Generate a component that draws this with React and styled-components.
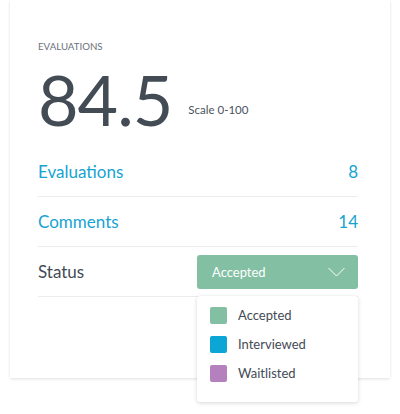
import React from 'react'
import styled, { createGlobalStyle } from 'styled-components'

const GlobalStyle = createGlobalStyle`
  body {
    margin: 0;
    background: #fff;
    font-family: Lato, "Open Sans", sans-serif;
  }
`

const Page = styled.div`
  min-height: 414px;
  box-sizing: border-box;
  padding: 0 10px 10px;
`

const Card = styled.div`
  width: 380px;
  box-sizing: border-box;
  background: #fff;
  box-shadow: 0 1px 3px rgba(0, 0, 0, 0.13);
  padding: 40px 32px 81px 28px;
`

const Label = styled.div`
  font-size: 9.7px;
  line-height: 12px;
  color: #6a717a;
  text-transform: uppercase;
`

const ScoreLine = styled.div`
  display: flex;
  align-items: flex-end;
  gap: 16px;
  margin-top: 12px;
  margin-bottom: 13px;
`

const Score = styled.div`
  font-size: 70px;
  line-height: 70px;
  color: #434b55;
  letter-spacing: -1px;
`

const Scale = styled.div`
  font-size: 11.5px;
  line-height: 14px;
  color: #4a535d;
  margin-bottom: 17px;
`

const Row = styled.div`
  display: flex;
  align-items: center;
  justify-content: space-between;
  min-height: 49px;
  border-bottom: 1px solid #ececec;
  font-size: 17px;
  color: ${p => (p.$link ? '#16a3d2' : '#434b55')};
`

const SelectWrap = styled.div`
  position: relative;
`

const Select = styled.div`
  width: 161px;
  height: 34px;
  box-sizing: border-box;
  background: #82bfa3;
  border-radius: 3px;
  display: flex;
  align-items: center;
  justify-content: space-between;
  padding: 0 13px 0 15px;
  color: #fff;
  font-size: 13px;
`

const Menu = styled.div`
  position: absolute;
  top: 41px;
  left: 0;
  width: 161px;
  box-sizing: border-box;
  background: #fff;
  border-radius: 3px;
  box-shadow: 0 1px 4px rgba(0, 0, 0, 0.16);
  padding: 5px 13px 14px;
  z-index: 2;
`

const Option = styled.div`
  display: flex;
  align-items: center;
  gap: 11px;
  height: 29px;
  font-size: 13px;
  color: #434b55;
`

const Swatch = styled.span`
  width: 17px;
  height: 17px;
  border-radius: 2px;
  background: ${p => p.$color};
`

const Chevron = () => (
  <svg width="17" height="10" viewBox="0 0 17 10">
    <path d="M0.5 1 L8.5 9 L16.5 1" fill="none" stroke="#fff" strokeWidth="1" />
  </svg>
)

const options = [
  { name: 'Accepted', color: '#82bfa3' },
  { name: 'Interviewed', color: '#0ba6d5' },
  { name: 'Waitlisted', color: '#b580be' },
]

export default function App() {
  return (
    <Page>
      <GlobalStyle />
      <Card>
        <Label>Evaluations</Label>
        <ScoreLine>
          <Score>84.5</Score>
          <Scale>Scale 0-100</Scale>
        </ScoreLine>
        <Row $link>
          <span>Evaluations</span>
          <span>8</span>
        </Row>
        <Row $link>
          <span>Comments</span>
          <span>14</span>
        </Row>
        <Row>
          <span>Status</span>
          <SelectWrap>
            <Select>
              <span>Accepted</span>
              <Chevron />
            </Select>
            <Menu>
              {options.map(o => (
                <Option key={o.name}>
                  <Swatch $color={o.color} />
                  {o.name}
                </Option>
              ))}
            </Menu>
          </SelectWrap>
        </Row>
      </Card>
    </Page>
  )
}
